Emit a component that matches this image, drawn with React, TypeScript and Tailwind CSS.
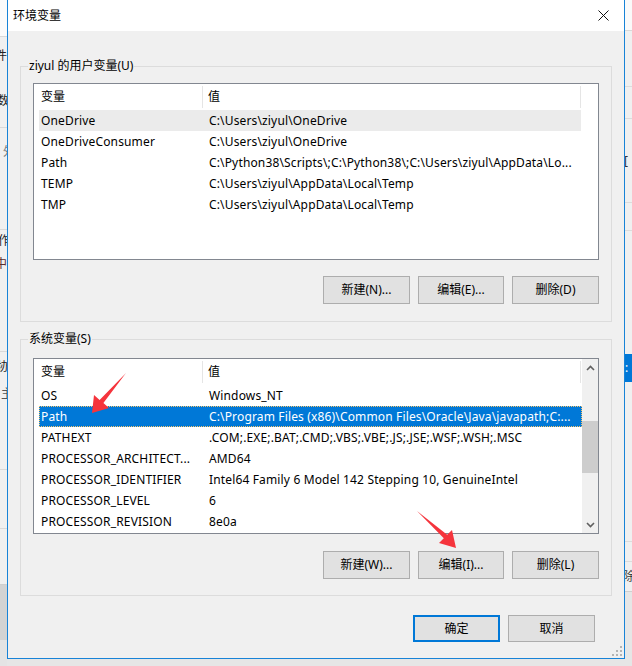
import type { ReactNode } from 'react';

type Row = { name: string; value: string; state?: 'soft' | 'active' };

const userVars: Row[] = [
  { name: 'OneDrive', value: 'C:\\Users\\ziyul\\OneDrive', state: 'soft' },
  { name: 'OneDriveConsumer', value: 'C:\\Users\\ziyul\\OneDrive' },
  { name: 'Path', value: 'C:\\Python38\\Scripts\\;C:\\Python38\\;C:\\Users\\ziyul\\AppData\\Lo...' },
  { name: 'TEMP', value: 'C:\\Users\\ziyul\\AppData\\Local\\Temp' },
  { name: 'TMP', value: 'C:\\Users\\ziyul\\AppData\\Local\\Temp' },
];

const systemVars: Row[] = [
  { name: 'OS', value: 'Windows_NT' },
  { name: 'Path', value: 'C:\\Program Files (x86)\\Common Files\\Oracle\\Java\\javapath;C:...', state: 'active' },
  { name: 'PATHEXT', value: '.COM;.EXE;.BAT;.CMD;.VBS;.VBE;.JS;.JSE;.WSF;.WSH;.MSC' },
  { name: 'PROCESSOR_ARCHITECT...', value: 'AMD64' },
  { name: 'PROCESSOR_IDENTIFIER', value: 'Intel64 Family 6 Model 142 Stepping 10, GenuineIntel' },
  { name: 'PROCESSOR_LEVEL', value: '6' },
  { name: 'PROCESSOR_REVISION', value: '8e0a' },
];

function WinButton({ label, width = 'w-[87px]', h = 'h-[28px]' }: { label: string; width?: string; h?: string }) {
  return (
    <button className={`${width} ${h} flex items-center justify-center bg-[#e1e1e1] border border-[#adadad] text-[12px] text-black`}>
      {label}
    </button>
  );
}

function Header({ end }: { end: string }) {
  return (
    <div className="flex h-[26px] shrink-0 bg-white">
      <div className="flex w-[168px] items-center pl-[7px]">变量</div>
      <div className="w-px my-[2px] bg-[#e5e5e5]" />
      <div className={`flex ${end} items-center pl-[5px]`}>值</div>
      <div className="w-px my-[2px] bg-[#e5e5e5]" />
    </div>
  );
}

function ListRow({ row, width }: { row: Row; width: string }) {
  const bg =
    row.state === 'active'
      ? 'bg-[#0078d7] text-white outline-1 outline-dotted outline-[#f7c46c] -outline-offset-1'
      : row.state === 'soft'
        ? 'bg-[#ebebeb]'
        : '';
  return (
    <div className={`flex h-[21px] ml-[5px] ${width} items-center whitespace-nowrap tracking-[0.15px] ${bg}`}>
      <div className="w-[163px] shrink-0 overflow-hidden pl-[2px]">{row.name}</div>
      <div className="flex-1 overflow-hidden pl-[7px]">{row.value}</div>
    </div>
  );
}

function Chevron({ up }: { up?: boolean }) {
  return (
    <div className="flex h-[17px] items-center justify-center">
      <svg width="9" height="6" viewBox="0 0 9 6">
        <path
          d={up ? 'M1 5 L4.5 1.5 L8 5' : 'M1 1 L4.5 4.5 L8 1'}
          fill="none"
          stroke="#606060"
          strokeWidth="1.6"
        />
      </svg>
    </div>
  );
}

function Group({ label, className, children }: { label: string; className: string; children: ReactNode }) {
  return (
    <div className={`relative border border-[#dcdcdc] px-[12px] ${className}`}>
      <span className="absolute left-[7px] -top-[9px] px-[1px] leading-[16px] bg-[#f0f0f0]">{label}</span>
      {children}
    </div>
  );
}

function Arrows() {
  return (
    <svg className="absolute left-0 top-0 pointer-events-none" width="632" height="666">
      <polygon points="126,373 103.4,403.1 109,408 92,413 94,395 99.6,399.9" fill="#f5343c" />
      <polygon points="417,511 447.2,534.7 452,530 456,548 439,543 443.8,538.3" fill="#f5343c" />
    </svg>
  );
}

function LeftStrip() {
  return (
    <div className="flex w-[7px] shrink-0 flex-col overflow-hidden bg-[#f0f0f0] text-[12px] text-[#222]">
      <div className="h-[37px] border-b border-[#d9d9d9] bg-[#fbfbfb]" />
      <div className="flex h-[37px] items-center whitespace-nowrap -ml-[5px]">件</div>
      <div className="flex h-[54px] items-center whitespace-nowrap -ml-[3px] border-b border-[#d9d9d9]">数</div>
      <div className="flex h-[48px] items-center whitespace-nowrap ml-[3px] text-[#777]">外</div>
      <div className="h-[54px] border-b border-[#d9d9d9]" />
      <div className="flex h-[22px] items-center whitespace-nowrap -ml-[2px]">作</div>
      <div className="flex h-[24px] items-center whitespace-nowrap -ml-[5px] text-[#5a2d2d]">中</div>
      <div className="h-[76px] border-b border-[#d9d9d9]" />
      <div className="flex h-[30px] items-center whitespace-nowrap -ml-[3px]">协</div>
      <div className="flex h-[24px] items-center whitespace-nowrap ml-[1px] text-[#555]">主</div>
      <div className="h-[64px] border-b border-[#d9d9d9]" />
      <div className="h-[59px] border-b border-[#d9d9d9]" />
      <div className="h-[56px] border-b border-[#cfcfcf]" />
      <div className="h-[55px] bg-[#d3d3d3]" />
      <div className="flex-1 bg-[#e4e4e4]" />
    </div>
  );
}

function RightStrip() {
  return (
    <div className="flex w-[7px] shrink-0 flex-col overflow-hidden bg-[#f0f0f0] text-[12px]">
      <div className="h-[31px] bg-[#fafafa] border-b border-[#d9d9d9]" />
      <div className="h-[56px] border-b border-[#dcdcdc]" />
      <div className="h-[32px] border-b border-[#dcdcdc]" />
      <div className="flex h-[84px] items-center whitespace-nowrap -ml-[1px] border-b border-[#dcdcdc] text-[#333]">[</div>
      <div className="h-[28px] border-b border-[#dcdcdc]" />
      <div className="h-[123px]" />
      <div className="flex h-[28px] items-center bg-[#0078d7] text-white whitespace-nowrap">:</div>
      <div className="h-[160px] border-b border-[#dcdcdc]" />
      <div className="h-[20px] border-b border-[#dcdcdc]" />
      <div className="flex h-[30px] items-center whitespace-nowrap -ml-[2px] border-b border-[#cfcfcf] text-[#333]">除</div>
      <div className="flex-1 bg-[#e6e6e6]" />
    </div>
  );
}

export default function App() {
  return (
    <div className="relative flex w-[632px] h-[666px] overflow-hidden bg-[#e6e6e6] text-[12px] leading-[16px] text-black font-['Noto_Sans','Noto_Sans_CJK_SC',sans-serif]">
      <LeftStrip />

      <div className="relative flex w-[618px] h-[659px] shrink-0 flex-col border-x border-b border-[#1883d7] bg-[#f0f0f0]">
        {/* title bar */}
        <div className="flex h-[31px] shrink-0 items-center justify-between bg-white pl-[5px] pr-[15px]">
          <span>环境变量</span>
          <svg width="11" height="11" viewBox="0 0 11 11">
            <path d="M0.5 0.5 L10.5 10.5 M10.5 0.5 L0.5 10.5" stroke="#111" strokeWidth="1" />
          </svg>
        </div>

        <div className="flex flex-col px-[12px]">
          <Group label="ziyul 的用户变量(U)" className="mt-[35px] h-[256px] pt-[16px]">
            <div className="h-[177px] border border-[#828790] bg-white">
              <Header end="w-[377px]" />
              {userVars.map((r) => (
                <ListRow key={r.name} row={r} width="w-[542px]" />
              ))}
            </div>
            <div className="mt-[16px] flex justify-end gap-[8px]">
              <WinButton label="新建(N)..." />
              <WinButton label="编辑(E)..." width="w-[86px]" />
              <WinButton label="删除(D)" />
            </div>
          </Group>

          <Group label="系统变量(S)" className="mt-[17px] h-[257px] pt-[18px]">
            <div className="flex h-[176px] border border-[#828790] bg-white">
              <div className="flex w-[548px] flex-col">
                <Header end="w-[377px]" />
                {systemVars.map((r) => (
                  <ListRow key={r.name} row={r} width="w-[543px]" />
                ))}
              </div>
              <div className="flex w-[17px] flex-col bg-[#f0f0f0]">
                <Chevron up />
                <div className="flex-1">
                  <div className="mt-[45px] h-[52px] bg-[#cdcdcd]" />
                </div>
                <Chevron />
              </div>
            </div>
            <div className="mt-[17px] flex justify-end gap-[8px]">
              <WinButton label="新建(W)..." />
              <WinButton label="编辑(I)..." width="w-[86px]" />
              <WinButton label="删除(L)" />
            </div>
          </Group>

          <div className="mt-[19px] flex justify-end gap-[8px] pr-[17px]">
            <button className="flex h-[27px] w-[87px] items-center justify-center border-2 border-[#0078d7] bg-[#e1e1e1]">确定</button>
            <WinButton label="取消" h="h-[27px]" />
          </div>
        </div>

        {/* size grip */}
        <svg className="absolute right-[2px] bottom-[2px]" width="10" height="10" viewBox="0 0 10 10">
          <g fill="#b4b4b4">
            <rect x="8" y="0" width="2" height="2" />
            <rect x="4" y="4" width="2" height="2" />
            <rect x="8" y="4" width="2" height="2" />
            <rect x="0" y="8" width="2" height="2" />
            <rect x="4" y="8" width="2" height="2" />
            <rect x="8" y="8" width="2" height="2" />
          </g>
        </svg>
      </div>

      <RightStrip />
      <Arrows />
    </div>
  );
}
